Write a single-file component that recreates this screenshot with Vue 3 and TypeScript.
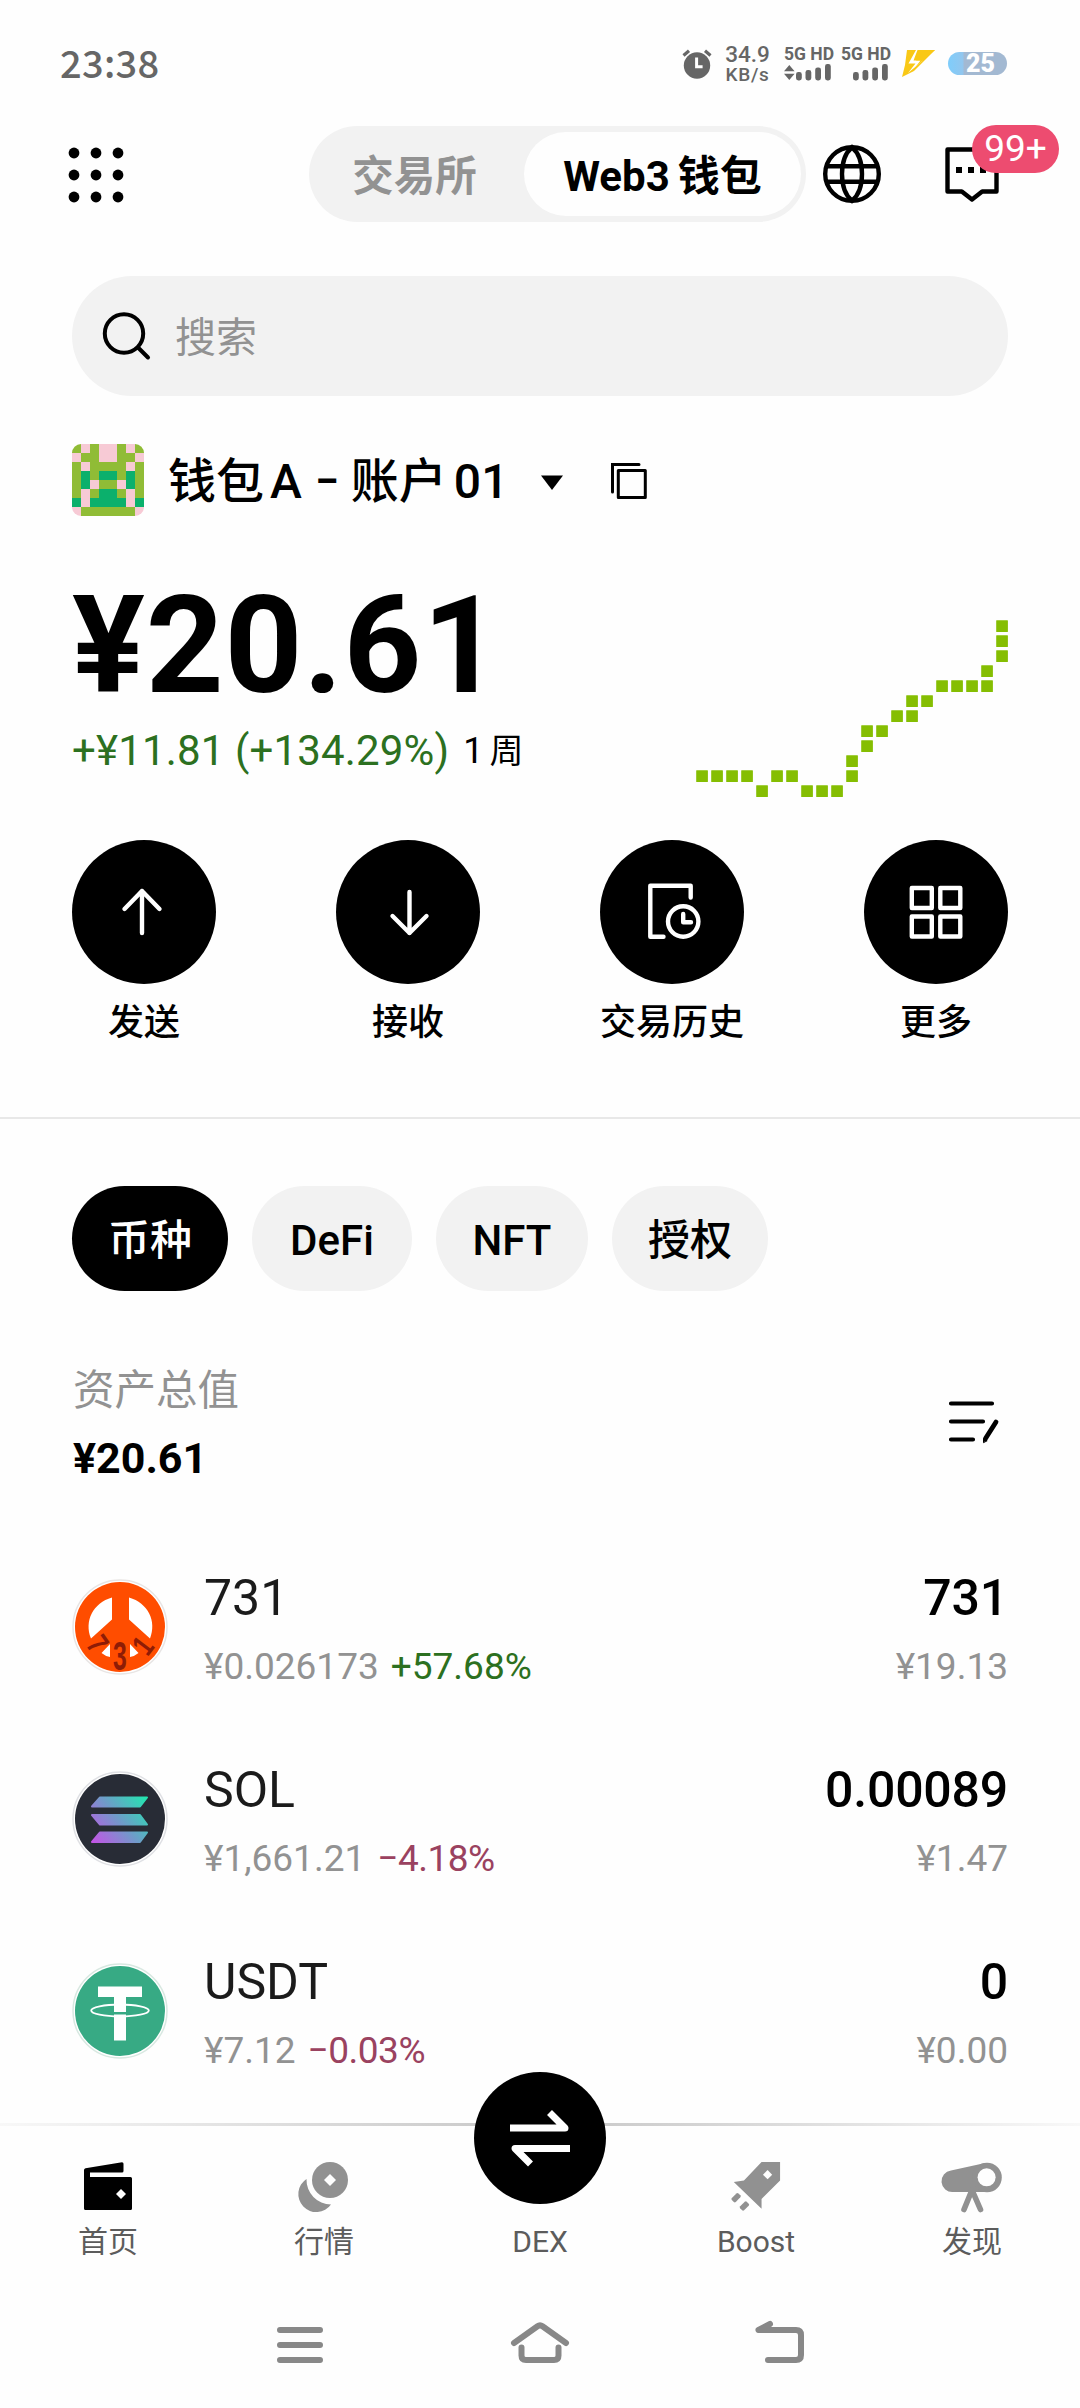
<script setup lang="ts">
interface Token {
  id: 'peace' | 'sol' | 'usdt'
  name: string
  price: string
  change: string
  up: boolean
  amount: string
  value: string
}

const tokens: Token[] = [
  { id: 'peace', name: '731', price: '¥0.026173', change: '+57.68%', up: true, amount: '731', value: '¥19.13' },
  { id: 'sol', name: 'SOL', price: '¥1,661.21', change: '−4.18%', up: false, amount: '0.00089', value: '¥1.47' },
  { id: 'usdt', name: 'USDT', price: '¥7.12', change: '−0.03%', up: false, amount: '0', value: '¥0.00' },
]

const tabs: { label: string; width: number }[] = [
  { label: '币种', width: 156 },
  { label: 'DeFi', width: 160 },
  { label: 'NFT', width: 152 },
  { label: '授权', width: 156 },
]

// Identicon: G = leaf, P = pink, T = teal
const avatarRows = ['GPGPPGPG', 'PGGPPGGP', 'GPGGGGPG', 'GTGTTGTG', 'GTPGGPTG', 'GPGTTGPG', 'TPTTTTPT', 'PGGGGGGP']
const avatarColors: Record<string, string> = { G: '#90bc36', P: '#f7cad5', T: '#0bb06c' }

// Sparkline cells as [column, row] on a 15px grid
const spark: number[][] = [
  [0, 10], [1, 10], [2, 10], [3, 10], [4, 11], [5, 10], [6, 10], [7, 11], [8, 11], [9, 11],
  [10, 10], [10, 9], [11, 8], [11, 7], [12, 7], [13, 6], [14, 6], [14, 5], [15, 5],
  [16, 4], [17, 4], [18, 4], [19, 4], [19, 3], [20, 2], [20, 1], [20, 0],
]
const dots = [6, 28, 50]
</script>

<template>
  <div class="screen">
    <header class="status">
      <span class="time">23:38</span>
      <div class="status-right">
        <svg class="alarm" width="30" height="30" viewBox="0 0 30 30">
          <circle cx="15" cy="16.5" r="13.2" fill="#666" />
          <path d="M1.5 6.5 7 1.8M28.5 6.5 23 1.8" stroke="#666" stroke-width="3.2" />
          <path d="M14.6 8.5v9.3h6" fill="none" stroke="#fff" stroke-width="3" />
        </svg>
        <div class="speed"><span>34.9</span><span class="unit">KB/s</span></div>
        <div class="sim">
          <span>5G HD</span>
          <svg width="47" height="17" viewBox="0 0 47 17" fill="#666">
            <path d="M0 7.2 5.3 1l5.3 6.2zM0 9.8h10.6L5.3 16z" />
            <rect x="12" y="8" width="5.8" height="8.5" rx="2.4" />
            <rect x="21.5" y="6" width="5.8" height="10.5" rx="2.4" />
            <rect x="31.2" y="3.4" width="5.8" height="13.1" rx="2.4" />
            <rect x="41" y="0" width="5.8" height="16.5" rx="2.4" />
          </svg>
        </div>
        <div class="sim second">
          <span>5G HD</span>
          <svg width="47" height="17" viewBox="0 0 47 17" fill="#666">
            <rect x="12" y="8" width="5.8" height="8.5" rx="2.4" />
            <rect x="21.5" y="6" width="5.8" height="10.5" rx="2.4" />
            <rect x="31.2" y="3.4" width="5.8" height="13.1" rx="2.4" />
            <rect x="41" y="0" width="5.8" height="16.5" rx="2.4" />
          </svg>
        </div>
        <svg class="bolt" width="33" height="28" viewBox="0 0 33 28">
          <path d="M5 0h28L12 21 0 27l3-12z" fill="#f9c816" />
          <path d="M14 0 6.5 13.5h7L6 23 21 10.5h-7L20.5 0z" fill="#fff" />
          <path d="M15.5 0H33L13.5 17l5-6.6h-7z" fill="#f9c816" />
        </svg>
        <span class="battery">25</span>
      </div>
    </header>

    <div class="topbar">
      <svg class="apps" width="56" height="56" viewBox="0 0 56 56">
        <template v-for="y in dots" :key="y">
          <circle v-for="x in dots" :key="x" :cx="x" :cy="y" r="5.4" />
        </template>
      </svg>
      <div class="segment">
        <span class="seg-off">交易所</span>
        <span class="seg-on"><span>Web3</span><span class="cjk-gap">钱包</span></span>
      </div>
      <svg class="globe" width="60" height="60" viewBox="0 0 60 60" fill="none" stroke="#000" stroke-width="4.4">
        <circle cx="30" cy="30" r="26.8" />
        <path d="M30 3.2C22 10 20 20 20 30s2 20 10 26.8C38 50 40 40 40 30S38 10 30 3.2zM4.5 22.2h51M4.5 37.8h51" />
      </svg>
      <div class="chat">
        <svg width="54" height="56" viewBox="0 0 54 56">
          <path d="M2.5 2.5h49v42H37.2L27 52.5 16.8 44.5H2.5z" fill="none" stroke="#000" stroke-width="4.4" stroke-linejoin="round" />
          <path d="M11 20h6v6h-6zM23 20h6v6h-6zM35 20h6v6h-6z" />
        </svg>
        <span class="badge">99+</span>
      </div>
    </div>

    <div class="search">
      <svg width="50" height="50" viewBox="0 0 50 50" fill="none" stroke="#000" stroke-width="4" stroke-linecap="round">
        <circle cx="22" cy="22.5" r="19.2" />
        <path d="M36.5 37 46 46.5" />
      </svg>
      <span>搜索</span>
    </div>

    <div class="account">
      <svg class="avatar" width="72" height="72" viewBox="0 0 8 8" shape-rendering="crispEdges">
        <template v-for="(row, y) in avatarRows" :key="y">
          <rect v-for="(c, x) in row.split('')" :key="x" :x="x" :y="y" width="1" height="1" :fill="avatarColors[c]" />
        </template>
      </svg>
      <div class="account-name">
        <span>钱包</span><span class="letter">A</span><span class="dash">–</span><span>账户</span><span class="num">01</span>
      </div>
      <svg class="caret" width="24" height="16" viewBox="0 0 24 16"><path d="M1 .5h22L12 15z" /></svg>
      <svg class="copy" width="38" height="38" viewBox="0 0 38 38" fill="none" stroke="#000" stroke-width="3">
        <path d="M2.5 30V2.5H29" stroke-linecap="round" />
        <rect x="8.3" y="8.5" width="27" height="27" stroke-linejoin="round" />
      </svg>
    </div>

    <section class="hero">
      <div>
        <div class="balance">¥20.61</div>
        <div class="delta"><span>+¥11.81 (+134.29%)</span><small>1<i>周</i></small></div>
      </div>
      <svg class="spark" width="312" height="178" viewBox="0 0 312 178" fill="#85be02">
        <rect v-for="(p, i) in spark" :key="i" :x="p[0] * 15 + 0.2" :y="p[1] * 15 + 0.3" width="11.7" height="11.7" rx="0.5" />
      </svg>
    </section>

    <section class="actions">
      <div class="action">
        <svg width="144" height="144" viewBox="0 0 144 144">
          <circle cx="72" cy="72" r="72" />
          <path d="M70 93V51M52.5 69 70 51 87.5 69" class="w" />
        </svg>
        <span>发送</span>
      </div>
      <div class="action">
        <svg width="144" height="144" viewBox="0 0 144 144">
          <circle cx="72" cy="72" r="72" />
          <path d="M73.5 52v41M56.5 76 73.5 93 90.5 76" class="w" />
        </svg>
        <span>接收</span>
      </div>
      <div class="action">
        <svg width="144" height="144" viewBox="0 0 144 144">
          <circle cx="72" cy="72" r="72" />
          <path d="M90.7 57.5V45.8H50.3v51H63.5" class="w" />
          <circle cx="83.2" cy="81.5" r="15.2" class="w" />
          <path d="M83.2 74v8.2h7.8" class="w" />
        </svg>
        <span>交易历史</span>
      </div>
      <div class="action">
        <svg width="144" height="144" viewBox="0 0 144 144">
          <circle cx="72" cy="72" r="72" />
          <path d="M47.8 48h20v20h-20zM76.3 48h20v20h-20zM47.8 76.5h20v20h-20zM76.3 76.5h20v20h-20z" class="w" />
        </svg>
        <span>更多</span>
      </div>
    </section>

    <nav class="tabs">
      <span v-for="(t, i) in tabs" :key="t.label" class="tab" :class="{ active: i === 0 }" :style="{ width: t.width + 'px' }">{{ t.label }}</span>
    </nav>

    <section class="total">
      <div>
        <div class="total-label">资产总值</div>
        <div class="total-value">¥20.61</div>
      </div>
      <svg class="sort" width="52" height="46" viewBox="0 0 52 46" fill="none" stroke="#000" stroke-width="4.2" stroke-linecap="round">
        <path d="M3 3.5h41M3 21.5h32M3 39.5h22" />
        <path d="M48 22 37.5 38.5" stroke-width="4.8" />
        <path d="M35.5 42.3v-3.5l3.3 1.8z" fill="#000" stroke-width="1" />
      </svg>
    </section>

    <section class="list">
      <div v-for="t in tokens" :key="t.id" class="row">
        <svg v-if="t.id === 'peace'" class="coin" width="96" height="96" viewBox="0 0 96 96">
          <circle cx="48" cy="48" r="47" fill="#fff" stroke="#e8e5e4" stroke-width="1.5" />
          <circle cx="48" cy="48" r="45" fill="#ff4d00" />
          <g fill="#fff">
            <path d="M40 18.5V40.5L19 59.5C12 42 21 24 40 18.5zM57 18.5V40.5L78 59.5C85 42 76 24 57 18.5z" />
            <path d="M38 65v13q-5-1-8.500-4zM58 65v13q5-1 8.500-4z" />
          </g>
          <g class="coin-text" text-anchor="middle">
            <text transform="translate(17 71) rotate(55) scale(0.75 1)">7</text>
            <text transform="translate(48 90.500) scale(0.62 1)" font-size="40">3</text>
            <text transform="translate(79.500 73) rotate(-53) scale(0.75 1)">1</text>
          </g>
        </svg>
        <svg v-else-if="t.id === 'sol'" class="coin" width="96" height="96" viewBox="0 0 96 96">
          <defs>
            <linearGradient id="solGrad" gradientUnits="userSpaceOnUse" x1="20" y1="70" x2="74" y2="26">
              <stop offset="0" stop-color="#c355e6" />
              <stop offset="0.5" stop-color="#6f9bc9" />
              <stop offset="1" stop-color="#22e6b0" />
            </linearGradient>
          </defs>
          <circle cx="48" cy="48" r="47" fill="#fff" stroke="#dfe0e4" stroke-width="1.5" />
          <circle cx="48" cy="48" r="45" fill="#282c36" />
          <g fill="url(#solGrad)" stroke="url(#solGrad)" stroke-width="2" stroke-linejoin="round">
            <path d="M28 26.5H75L68 35.5H20zM20 44H68L75 53.5H28zM28 61.5H75L68 71H20z" />
          </g>
        </svg>
        <svg v-else class="coin" width="96" height="96" viewBox="0 0 96 96">
          <circle cx="48" cy="48" r="47" fill="#fff" stroke="#d8e8e1" stroke-width="1.5" />
          <circle cx="48" cy="48" r="45" fill="#37aa84" />
          <path d="M26 23.5H70V34H54V77.5H42V34H26z" fill="#fff" />
          <path d="M41 49h14v2.500H41z" fill="#37aa84" />
          <ellipse cx="48" cy="47.5" rx="28.8" ry="6" fill="none" stroke="#fff" stroke-width="1.8" />
        </svg>
        <div class="left">
          <div class="name">{{ t.name }}</div>
          <div class="sub"><span>{{ t.price }}</span><span :class="t.up ? 'up' : 'down'">{{ t.change }}</span></div>
        </div>
        <div class="right">
          <div class="amount">{{ t.amount }}</div>
          <div class="sub">{{ t.value }}</div>
        </div>
      </div>
    </section>

    <footer class="bottom">
      <div class="hairline"></div>
      <div class="item">
        <svg width="48" height="50" viewBox="0 0 48 50">
          <path d="M1.5 6.2 38 .2q1.500 0 1.500 1.500V9q0 1.500-1.500 1.500H6V15H46.500Q48 15 48 16.500V46.500Q48 48 46.500 48H1.500Q0 48 0 46.500V8Q0 6.600 1.500 6.200z" />
          <path d="M37 27l5 5-5 5-5-5z" fill="#fefefe" />
        </svg>
        <span>首页</span>
      </div>
      <div class="item">
        <svg width="48" height="50" viewBox="0 0 48 50" fill="#919191">
          <circle cx="30" cy="18" r="18" />
          <path d="M6.5 17A18 18 0 1 0 31 42.5A24.8 24.8 0 0 1 6.5 17z" />
          <path d="M30 12l6 6-6 6-6-6z" fill="#fefefe" />
        </svg>
        <span>行情</span>
      </div>
      <div class="item">
        <div class="dex">
          <svg width="132" height="132" viewBox="0 0 132 132">
            <circle cx="66" cy="66" r="66" />
            <path d="M36 56H91L75.5 40.5M96 76.5H41L56.5 92" fill="none" stroke="#fff" stroke-width="7" stroke-linejoin="round" />
          </svg>
        </div>
        <span>DEX</span>
      </div>
      <div class="item">
        <svg width="56" height="54" viewBox="0 0 56 54" fill="#919191">
          <path d="M34 0H54V20L34 40V50.5L4 21.5 15 20z" />
          <path d="M40.5 8.7l5 5-5 5-5-5z" fill="#fefefe" />
          <rect x="-5" y="-3" width="10" height="6" rx="1.5" transform="translate(6.5 38.5) rotate(-45)" />
          <rect x="-5" y="-3" width="10" height="6" rx="1.5" transform="translate(15.5 47.5) rotate(-45)" />
        </svg>
        <span>Boost</span>
      </div>
      <div class="item">
        <svg width="60" height="50" viewBox="0 0 60 50" fill="#919191">
          <path d="M11 30A10.8 10.8 0 0 1 9 8.5L42 1.300 45 30z" />
          <circle cx="45" cy="15.500" r="14.800" />
          <circle cx="44.600" cy="15.300" r="9" fill="#fefefe" />
          <path d="M30 28 22 47.5M30 28 38.5 47.5" stroke="#919191" stroke-width="5.6" stroke-linecap="round" />
        </svg>
        <span>发现</span>
      </div>
    </footer>

    <div class="sysnav">
      <svg width="60" height="50" viewBox="0 0 60 50" class="sys"><path d="M10 12h40M10 27h40M10 42h40" /></svg>
      <svg width="60" height="50" viewBox="0 0 60 50" class="sys"><path d="M4 25 27.5 8.3Q30 6.5 32.5 8.3L56 25M11.5 29.500V37.500Q11.500 42 16 42H44Q48.500 42 48.500 37.500V29.500" /></svg>
      <svg width="60" height="50" viewBox="0 0 60 50" class="sys"><path d="M20 6 8.5 12H46Q51 12 51 17V37Q51 42 46 42H18" /></svg>
    </div>
  </div>
</template>

<style>
html,
body {
  margin: 0;
  background: #fefefe;
}
</style>

<style scoped>
.screen {
  width: 1080px;
  height: 2408px;
  overflow: hidden;
  background: #fefefe;
  color: #000;
  font-family: Roboto, "Noto Sans CJK SC", sans-serif;
  display: flex;
  flex-direction: column;
  white-space: nowrap;
}
svg { display: block; flex: none; overflow: visible; }

.status {
  height: 126px;
  flex: none;
  display: flex;
  justify-content: space-between;
  align-items: center;
  padding: 0 73px 0 60px;
  box-sizing: border-box;
  color: #666;
}
.time { font: 500 38px/44px "Noto Sans CJK SC", sans-serif; letter-spacing: 0.3px; margin-top: -2px; }
.status-right { display: flex; align-items: center; }
.alarm { margin: 2px 13px 0 0; }
.speed { display: flex; flex-direction: column; width: 45px; font-size: 22.5px; font-weight: 500; line-height: 17px; align-items: center; margin-top: 2px; }
.speed .unit { font-size: 19px; margin-top: 4px; line-height: 15px; letter-spacing: 0.7px; }
.sim { width: 47px; margin: 2px 0 0 14px; font-weight: 700; font-size: 17.5px; line-height: 14px; display: flex; flex-direction: column; gap: 3px; }
.sim.second { margin-left: 10px; }
.bolt { margin: 2px 13px 0 14px; }
.battery {
  width: 59px;
  height: 23px;
  border-radius: 12px;
  background: linear-gradient(90deg, #7fcdfb 0, #92c6ee 15px, #a3b9d2 16px);
  color: #fff;
  font-weight: 900;
  font-size: 25px;
  line-height: 23px;
  text-indent: 18px;
  margin-top: 1px;
}

.topbar { height: 96px; flex: none; display: flex; align-items: center; padding-left: 68px; }
.apps { margin-top: 2px; }
.segment {
  margin-left: 185px;
  width: 497px;
  height: 96px;
  border-radius: 48px;
  background: #f2f2f2;
  display: flex;
  align-items: center;
  box-sizing: border-box;
  padding-right: 5px;
  font-size: 42px;
  line-height: 60px;
}
.seg-off { flex: 1; text-align: center; font-size: 41.5px; font-weight: 700; color: #929292; padding-right: 4px; margin-top: 5px; }
.seg-on { width: 277px; height: 84px; line-height: 89px; border-radius: 42px; background: #fefefe; display: flex; justify-content: center; font-weight: 700; }
.cjk-gap { margin-left: 8px; }
.globe { margin-left: 16px; }
.chat { position: relative; margin: 2px 0 0 63px; }
.badge {
  position: absolute;
  left: 27px;
  top: -22px;
  width: 87px;
  height: 48px;
  border-radius: 24px;
  background: #ed4c70;
  color: #fff;
  font-size: 37px;
  line-height: 48px;
  text-align: center;
}

.search {
  margin: 54px 72px 0;
  height: 120px;
  flex: none;
  border-radius: 60px;
  background: #f2f2f2;
  display: flex;
  align-items: center;
  padding-left: 30px;
  font-size: 41px;
  color: #929292;
}
.search span { margin: 3px 0 0 23px; line-height: 60px; }

.account { margin: 48px 72px 0; height: 72px; flex: none; display: flex; align-items: center; }
.avatar { border-radius: 9px; overflow: hidden; }
.account-name { display: flex; margin-left: 24px; font-size: 48px; line-height: 72px; font-weight: 500; padding-top: 4px; }
.letter { margin-left: 6px; }
.dash { width: 20px; margin: 0 18px 0 11px; overflow: visible; transform: scaleX(0.75); }
.num { margin-left: 7px; }
.caret { margin: 5px 0 0 32px; }
.copy { margin: 2px 0 0 46px; }

.hero { margin: 58px 72px 0; height: 266px; flex: none; display: flex; justify-content: space-between; }
.balance { font-weight: 700; font-size: 136px; line-height: 136px; letter-spacing: 0.8px; padding-top: 4px; }
.delta { margin-top: 7px; line-height: 60px; font-size: 42px; letter-spacing: 0.15px; color: #2c7020; display: flex; align-items: center; }
.delta small { color: #000; font-size: 36px; margin-left: 14px; }
.delta i { font-style: normal; font-size: 34px; margin-left: 6px; }
.spark { margin-top: 46px; }

.actions {
  height: 279px;
  flex: none;
  box-sizing: border-box;
  padding: 0 72px;
  display: flex;
  justify-content: space-between;
  border-bottom: 2px solid #e8e8e8;
}
.action { width: 144px; display: flex; flex-direction: column; align-items: center; }
.action span { margin-top: 15px; font-size: 36px; line-height: 48px; font-weight: 500; }
.w { fill: none; stroke: #fff; stroke-width: 4.4px; stroke-linecap: round; stroke-linejoin: round; }

.tabs { display: flex; gap: 24px; padding: 67px 72px 0; flex: none; }
.tab { height: 105px; line-height: 109px; border-radius: 53px; background: #f2f2f2; text-align: center; font-size: 42px; font-weight: 500; box-sizing: border-box; }
.tab.active { background: #000; color: #fff; }

.total { display: flex; justify-content: space-between; padding: 75px 80px 0 73px; height: 240px; box-sizing: border-box; flex: none; }
.total-label { font-size: 41.5px; line-height: 50px; color: #929292; }
.total-value { font-size: 43px; line-height: 50px; font-weight: 700; margin-top: 17px; }
.sort { margin-top: 34px; }

.list { flex: none; height: 592px; overflow: hidden; }
.row { height: 192px; box-sizing: border-box; padding: 39px 72px 0; display: flex; align-items: flex-start; }
.coin { margin-top: 9px; }
.coin-text { font-family: "Liberation Sans", sans-serif; font-weight: 700; font-size: 31px; fill: #8e1c06; }
.left { margin-left: 36px; flex: 1; }
.name { font-size: 50px; line-height: 56px; color: #1b1b1b; }
.sub { display: flex; gap: 12px; margin-top: 19px; font-size: 37px; line-height: 44px; color: #929292; }
.up { color: #2c7020; }
.down { color: #9a4260; letter-spacing: -0.5px; }
.right { display: flex; flex-direction: column; align-items: flex-end; }
.amount { font-size: 50px; line-height: 56px; font-weight: 500; letter-spacing: -0.2px; }

.bottom { position: relative; height: 175px; flex: none; display: flex; }
.hairline {
  position: absolute;
  left: 0;
  right: 0;
  top: 0;
  height: 3px;
  background: linear-gradient(90deg, #f8f8f8, #d4d4d4 35%, #c8c8c8 50%, #d4d4d4 65%, #f8f8f8);
}
.item { width: 216px; padding-top: 39px; display: flex; flex-direction: column; align-items: center; font-size: 30px; line-height: 40px; color: #5c5c5c; position: relative; }
.item > svg { height: 50px; }
.item > span { position: relative; margin-top: 10px; }
.dex { height: 50px; }
.dex svg { position: relative; top: -90px; }

.sysnav { flex: 1; display: flex; justify-content: center; gap: 180px; padding-top: 20px; }
.sys { fill: none; stroke: #888; stroke-width: 6px; stroke-linecap: round; stroke-linejoin: round; }
</style>
